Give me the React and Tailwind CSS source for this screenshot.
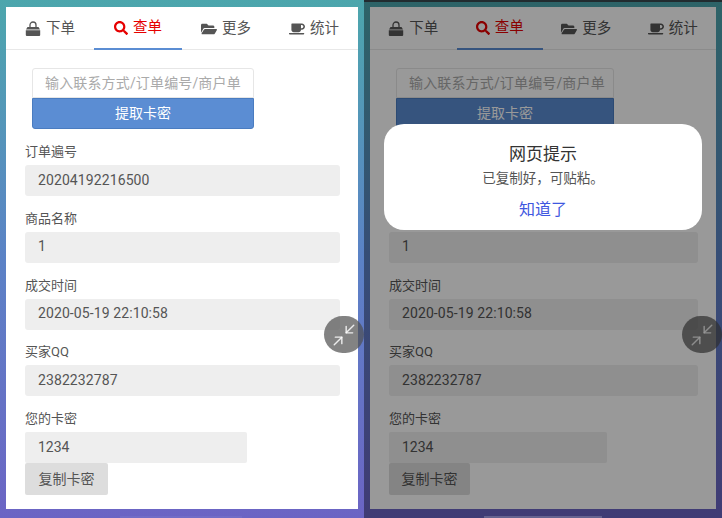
import { FaSearch, FaFolderOpen, FaCoffee } from 'react-icons/fa';
import { Minimize2 } from 'lucide-react';

const FIELDS = [
  { label: '订单遍号', value: '20204192216500' },
  { label: '商品名称', value: '1' },
  { label: '成交时间', value: '2020-05-19 22:10:58' },
  { label: '买家QQ', value: '2382232787' },
];

function BagIcon({ className }) {
  return (
    <svg viewBox="0 0 16 16" className={className} fill="currentColor">
      <path d="M2.500 6h11l1.500 2.400H1z" />
      <path d="M0.800 9.200h14.400V14a1 1 0 0 1-1 1H1.800a1 1 0 0 1-1-1z" />
      <path d="M5 6V4a3 3 0 0 1 6 0v2" fill="none" stroke="currentColor" strokeWidth="1.300" />
    </svg>
  );
}

function Tabs() {
  const tabs = [
    { name: '下单', icon: <BagIcon className="w-4 h-4" /> },
    { name: '查单', icon: <FaSearch className="w-[14px] h-[14px]" />, active: true },
    { name: '更多', icon: <FaFolderOpen className="w-4 h-4" /> },
    { name: '统计', icon: <FaCoffee className="w-4 h-4" /> },
  ];
  return (
    <div className="flex h-[43px] border-b border-[#e8e8e8]">
      {tabs.map((tab) => (
        <div
          key={tab.name}
          className={`flex-1 flex items-center justify-center gap-[5px] h-[43px] text-[14.500px] ${
            tab.active ? 'text-[#e60000] border-b-2 border-[#5b8dd3]' : 'text-[#555]'
          }`}
        >
          {tab.icon}
          <span>{tab.name}</span>
        </div>
      ))}
    </div>
  );
}

function Content({ narrow }) {
  const groupWidth = narrow ? 'w-[218px]' : 'w-[222px]';
  const copyWidth = narrow ? 'w-[81px]' : 'w-[83px]';
  return (
    <div className="pl-[19px] pr-[18px]">
      <div className={`${groupWidth} ml-[7px] mt-[18px] mb-[13px]`}>
        <input
          readOnly
          placeholder="输入联系方式/订单编号/商户单"
          className="w-full h-[30px] pl-[12px] text-sm tracking-[0.150px] bg-white border border-[#e6e6e6] rounded-t-[3px] outline-none placeholder:text-[#aaa]"
        />
        <button className="block w-full h-[31px] pb-[2px] text-sm text-white bg-[#5b8dd3] border border-[#4a7cc0] rounded-b-[3px]">
          提取卡密
        </button>
      </div>
      {FIELDS.map((field) => (
        <div key={field.label} className="mb-[12.750px]">
          <div className="h-5 mb-[3px] text-[13px] leading-5 text-[#555]">{field.label}</div>
          <input
            readOnly
            value={field.value}
            className="w-full h-[31px] pl-[13px] pb-[2px] text-sm tracking-[0.100px] text-[#555] bg-[#eee] rounded-[3px] outline-none"
          />
        </div>
      ))}
      <div className="h-5 mb-[3px] text-[13px] leading-5 text-[#555]">您的卡密</div>
      <input
        readOnly
        value="1234"
        className={`block ${groupWidth} h-[31px] pl-[13px] pb-[1px] text-sm text-[#555] bg-[#eee] rounded-[2px] outline-none`}
      />
      <button className={`block ${copyWidth} h-8 text-sm text-[#555] bg-[#ddd] rounded-[2px]`}>复制卡密</button>
    </div>
  );
}

function FloatButton({ className }) {
  return (
    <div className={`absolute flex items-center justify-center w-10 h-[37px] rounded-full bg-[#4f4f4f]/70 text-white/85 ${className}`}>
      <Minimize2 size={26} strokeWidth={1.300} />
    </div>
  );
}

export default function App() {
  return (
    <div
      className="relative flex w-[722px] h-[518px] overflow-hidden bg-gradient-to-b from-[#4ca6ac] via-[#5b82c6] to-[#6b64c4]"
      style={{ fontFamily: 'Roboto, "Noto Sans CJK SC", sans-serif' }}
    >
      <div className="relative w-[361px] pt-[7px] pb-[9px] pl-[6px] pr-[3px]">
        <div className="h-full bg-white overflow-hidden">
          <Tabs />
          <Content />
        </div>
        <div className="absolute bottom-0 left-[120px] w-[122px] h-[2px] bg-white/5" />
      </div>

      <div className="relative w-[361px] pt-[7px] pb-[9px] pl-[9px] pr-[6px]">
        <div className="h-full bg-white overflow-hidden">
          <Tabs />
          <Content narrow />
        </div>
        <FloatButton className="top-[316px] right-0" />
        <div className="absolute inset-y-0 left-[3px] right-0 bg-black/40" />
        <div className="absolute top-0 left-[3px] right-0 h-[2px] bg-[#222c30]" />
        <div className="absolute bottom-0 left-[123px] w-[118px] h-[2px] bg-white/20" />
        <div className="absolute left-[23px] top-[124px] w-[318px] h-[106px] pt-[18px] rounded-[20px] bg-white text-center">
          <div className="h-6 text-[17px] leading-6 text-[#333]">网页提示</div>
          <div className="h-5 mt-[2px] text-[13.500px] leading-5 text-[#555]">已复制好，可贴粘。</div>
          <div className="h-6 mt-[10px] text-base leading-6 text-[#3f57e0]">知道了</div>
        </div>
      </div>

      <FloatButton className="top-[316px] left-[324px]" />
    </div>
  );
}
